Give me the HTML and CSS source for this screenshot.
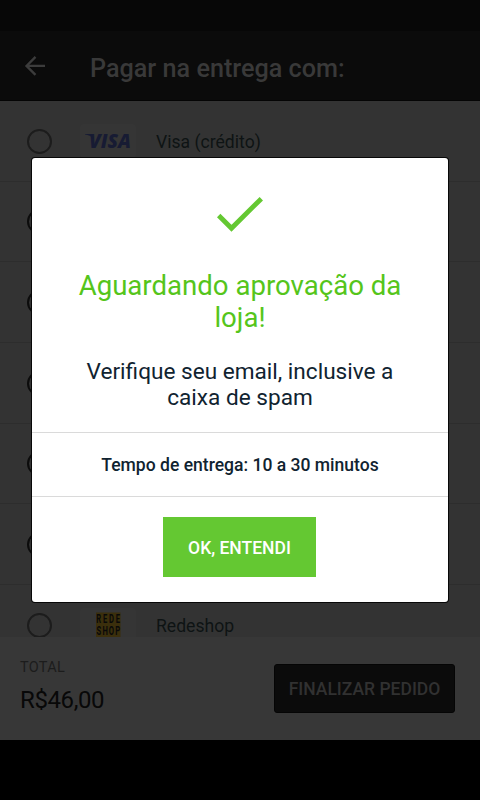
FILE: index.html
```html
<!DOCTYPE html>
<html lang="pt-BR">
<head>
<meta charset="utf-8">
<title>Pagar na entrega</title>
<link rel="stylesheet" href="styles.css">
</head>
<body>
<div class="screen">
  <div class="status"></div>
  <header class="appbar">
    <svg class="back" width="24" height="24" viewBox="0 0 24 24"><path d="M22 11.9H4M12.5 2.9L3.500 11.900L12.500 20.900" fill="none" stroke="#3c3c3c" stroke-width="2.300"/></svg>
    <h1>Pagar na entrega com:</h1>
  </header>
  <main class="list">
    <div class="row"><span class="radio"></span><span class="brand"><svg width="56" height="34" viewBox="0 0 56 34"><text x="9" y="24" class="visa" textLength="42" lengthAdjust="spacingAndGlyphs">VISA</text><path d="M5 10h6.500l2 5C11 12 8.500 11 5 10.500z" fill="#171b33"/></svg></span><span class="name">Visa (crédito)</span></div>
    <div class="row"><span class="radio dark"></span></div>
    <div class="row"><span class="radio dark"></span></div>
    <div class="row"><span class="radio dark"></span></div>
    <div class="row"><span class="radio dark"></span></div>
    <div class="row"><span class="radio dark"></span></div>
    <div class="row"><span class="radio"></span><span class="brand"><svg width="56" height="34" viewBox="0 0 56 34"><rect x="16" y="4.500" width="24.500" height="29.500" fill="#3b2f0c"/><g class="rede"><text x="29.500 39.500 49.500 59.500" y="14.800">REDE</text><text x="29.500 39.500 49.500 59.500" y="27.500">SHOP</text></g></svg></span><span class="name">Redeshop</span></div>
  </main>
  <footer class="total">
    <div><div class="label">TOTAL</div><div class="price">R$46,00</div></div>
    <button class="finish">FINALIZAR PEDIDO</button>
  </footer>
  <div class="nav"></div>
  <div class="dialog">
    <section class="message">
      <svg class="check" width="48" height="38" viewBox="0 0 48 38"><path d="M2.700 19.500L15.500 32.300L45.300 2.700" fill="none" stroke="#64c832" stroke-width="4.800"/></svg>
      <h2>Aguardando aprovação da<br>loja!</h2>
      <p>Verifique seu email, inclusive a<br>caixa de spam</p>
    </section>
    <section class="time">Tempo de entrega: 10 a 30 minutos</section>
    <section class="action"><button class="ok">OK, ENTENDI</button></section>
  </div>
</div>
</body>
</html>
```
FILE: styles.css
```css
* { box-sizing: border-box; }
body { margin: 0; font-family: Roboto, "Liberation Sans", sans-serif; }
.screen { position: relative; width: 480px; height: 800px; background: #000; display: flex; flex-direction: column; overflow: hidden; }
.status { flex: none; height: 31px; background: #070707; }
.appbar { flex: none; height: 70px; background: #0b0b0b; display: flex; align-items: center; padding: 1px 0 0 23px; border-bottom: 1px solid #040404; }
.back { margin-right: 43px; }
h1 { margin: 5px 0 0; font-size: 25.200px; line-height: 30px; font-weight: 500; color: #393939; white-space: nowrap; }
.list { flex: none; height: 536px; overflow: hidden; background: #333; }
.row { height: 80.670px; display: flex; align-items: center; padding-left: 27px; border-bottom: 1px solid #2d2d2d; }
.radio { flex: none; width: 25px; height: 25px; margin-top: 1px; border: 2px solid #1c1c1c; border-radius: 50%; }
.radio.dark { border-color: #0c0c0c; }
.brand { width: 56px; height: 34px; margin-left: 28px; background: #353535; border-radius: 3px; }
.brand svg { display: block; }
.visa { font: italic 800 20px "Open Sans", sans-serif; fill: #171b33; }
.rede { font: 700 12px Roboto, sans-serif; fill: #090909; text-anchor: middle; transform: scaleX(.635); transform-origin: 0 0; }
.name { margin: 2px 0 0 20px; font-size: 17.600px; color: #0e1314; }
.total { flex: none; height: 103px; background: #373737; display: flex; justify-content: space-between; padding: 20px 25px 0 20px; }
.label { margin-top: 1px; font-size: 14.500px; line-height: 20px; color: #1c1c1c; letter-spacing: .3px; }
.price { margin-top: 7px; font-size: 24px; line-height: 30px; color: #080808; letter-spacing: -.4px; }
button { border: 0; padding: 0; font-family: inherit; font-weight: 500; }
.finish { width: 181px; height: 49px; margin-top: 7px; background: #0b0b0b; border: 1px solid #050505; border-radius: 3px; color: #313131; font-size: 17.500px; white-space: nowrap; }
.nav { flex: 1; background: #000; }
.dialog { position: absolute; left: 32px; top: 158px; width: 416px; height: 444px; background: #fff; border-radius: 3px; box-shadow: 0 0 0 1px #080808; text-align: center; color: #102330; display: flex; flex-direction: column; }
.message { height: 275px; padding-top: 38px; border-bottom: 1px solid #dadada; }
.check { display: block; margin: 0 auto; }
h2 { margin: 36px 0 0; font-size: 27.600px; line-height: 32px; font-weight: 400; color: #55c51b; }
.message p { margin: 25px 0 0; font-size: 22.600px; line-height: 26px; }
.time { height: 64px; border-bottom: 1px solid #dadada; font-size: 17.550px; line-height: 64px; font-weight: 500; }
.action { padding: 20px 1px 0 0; }
.ok { width: 153px; height: 60px; padding-top: 1px; background: #64c832; color: #fff; font-size: 17.500px; }
```
